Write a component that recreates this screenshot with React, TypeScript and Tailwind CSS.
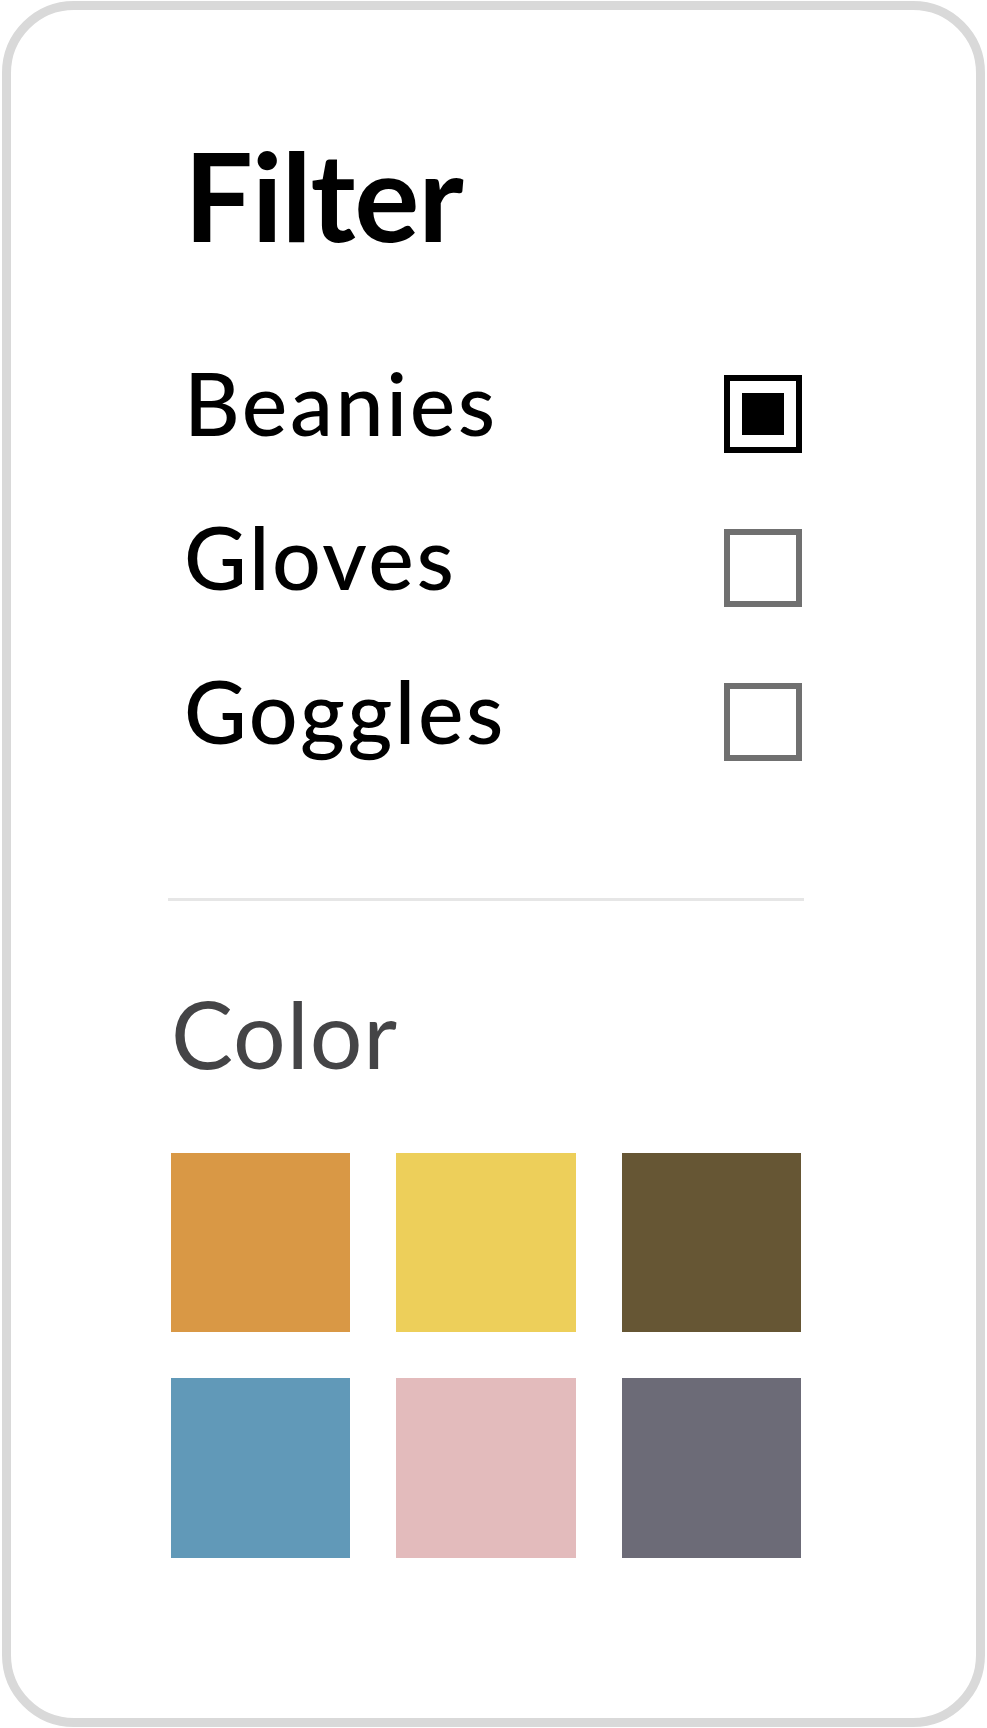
import React, { useState } from 'react';

type Category = { label: string; checked: boolean };

const categories: Category[] = [
  { label: 'Beanies', checked: true },
  { label: 'Gloves', checked: false },
  { label: 'Goggles', checked: false },
];

// swatch colours, in row order
const swatches = ['#d99845', '#edcf5a', '#665634', '#6199b8', '#e3bbbc', '#6c6b77'];

const Checkbox = ({ checked, onClick }: { checked: boolean; onClick: () => void }) => (
  <button
    type="button"
    onClick={onClick}
    className={`flex h-[78px] w-[78px] items-center justify-center border-[6px] ${
      checked ? 'border-black' : 'border-[#707070]'
    } bg-white`}
  >
    {checked && <span className="block h-[42px] w-[42px] bg-black" />}
  </button>
);

export default function App() {
  const [items, setItems] = useState(categories);

  const toggle = (index: number) =>
    setItems((prev) =>
      prev.map((item, i) => (i === index ? { ...item, checked: !item.checked } : item))
    );

  return (
    <div className="h-[1728px] w-[987px] bg-white pl-[2px] pt-[1px] font-['Lato',sans-serif]">
      <div className="h-[1726px] w-[983px] rounded-[72px] border-[9px] border-[#d9d9d9] bg-white pl-[157px] pr-[172px] pt-[124px]">
        {/* heading */}
        <h1 className="ml-[16px] text-[122px] font-bold leading-none tracking-[-0.01em] text-black">
          Filter
        </h1>

        {/* categories */}
        <ul className="mt-[119px] flex flex-col gap-[76px] pr-[2px]">
          {items.map((item, index) => (
            <li key={item.label} className="flex h-[78px] items-center justify-between">
              <span className="mb-[22px] ml-[16px] text-[86px] font-medium leading-none tracking-[0.03em] text-black">
                {item.label}
              </span>
              <Checkbox checked={item.checked} onClick={() => toggle(index)} />
            </li>
          ))}
        </ul>

        <div className="mt-[137px] h-[3px] bg-[#e6e6e6]" />

        {/* colours */}
        <h2 className="ml-[3px] mt-[86px] text-[93px] font-normal leading-none tracking-[0.01em] text-[#444446]">
          Color
        </h2>

        <div className="mt-[73px] grid grid-cols-3 gap-x-[46px] gap-y-[46px] px-[3px]">
          {swatches.map((color) => (
            <button
              key={color}
              type="button"
              className="aspect-square w-full"
              style={{ backgroundColor: color }}
            />
          ))}
        </div>
      </div>
    </div>
  );
}
